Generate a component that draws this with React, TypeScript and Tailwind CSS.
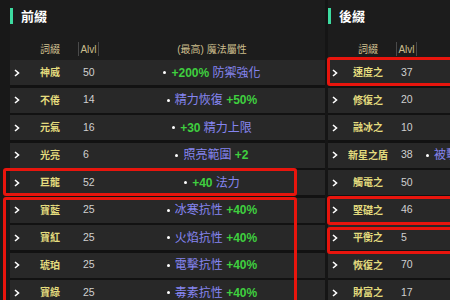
import React from 'react';

type Affix = {
  name: string;
  alvl: number;
  prop: React.ReactNode;
};

const G = ({ children }: { children: React.ReactNode }) => (
  <span className="font-bold text-[#3fcf3f]">{children}</span>
);
const B = ({ children }: { children: React.ReactNode }) => (
  <span className="text-[#8585f0]">{children}</span>
);

const prefixes: Array<Affix> = [
  { name: '神威', alvl: 50, prop: <><G>+200%</G> <B>防禦強化</B></> },
  { name: '不倦', alvl: 14, prop: <><B>精力恢復</B> <G>+50%</G></> },
  { name: '元氣', alvl: 16, prop: <><G>+30</G> <B>精力上限</B></> },
  { name: '光亮', alvl: 6, prop: <><B>照亮範圍</B> <G>+2</G></> },
  { name: '巨龍', alvl: 52, prop: <><G>+40</G> <B>法力</B></> },
  { name: '寶藍', alvl: 25, prop: <><B>冰寒抗性</B> <G>+40%</G></> },
  { name: '寶紅', alvl: 25, prop: <><B>火焰抗性</B> <G>+40%</G></> },
  { name: '琥珀', alvl: 25, prop: <><B>電擊抗性</B> <G>+40%</G></> },
  { name: '寶綠', alvl: 25, prop: <><B>毒素抗性</B> <G>+40%</G></> },
];

const suffixes: Array<Affix> = [
  { name: '速度之', alvl: 37, prop: <><G>+20%</G> <B>攻擊速度</B></> },
  { name: '修復之', alvl: 20, prop: <><B>自動修復</B></> },
  { name: '融冰之', alvl: 10, prop: <><B>冰凍時間減半</B></> },
  { name: '新星之盾', alvl: 38, prop: <><B>被擊中時有</B> <G>10%</G> <B>機率施放</B> <G>7</G> <B>級新星術</B></> },
  { name: '觸電之', alvl: 50, prop: <><B>閃電傷害</B> <G>+1-60</G></> },
  { name: '堅礎之', alvl: 46, prop: <><B>防禦</B> <G>+15</G></> },
  { name: '平衡之', alvl: 5, prop: <><G>+10%</G> <B>受擊恢復</B></> },
  { name: '恢復之', alvl: 70, prop: <><B>生命恢復</B> <G>+5</G></> },
  { name: '財富之', alvl: 17, prop: <><G>+40%</G> <B>金幣掉落</B></> },
];

const Chevron = () => (
  <svg width="6" height="8" viewBox="0 0 6 8" className="ml-[4px]">
    <polyline points="1,1 4.5,4 1,7" fill="none" stroke="#ffffff" strokeWidth="1.6" />
  </svg>
);

const Panel = ({ title, rows }: { title: string; rows: Array<Affix> }) => {
  return (
    <div className="w-[315px] shrink-0 flex flex-col">
      <div className="shrink-0 flex items-center h-[16px] mt-[8px]">
        <div className="w-[3px] h-[16px] bg-[#3ddba0]" />
        <div className="ml-[8px] text-[13px] font-bold text-white leading-none">{title}</div>
      </div>
      <div className="shrink-0 flex items-center h-[22px] mt-[14px] text-[10px] text-[#cbbd8c]">
        <div className="w-[14px]" />
        <div className="w-[52px] text-center">詞綴</div>
        <div className="ml-[2px] w-[21px] h-[14px] border-x border-[#4a4a4a] flex items-center justify-center">
          Alvl
        </div>
        <div className="flex-1 text-center">(最高) 魔法屬性</div>
      </div>
      <div className="shrink-0 flex flex-col gap-[2.5px] bg-[#121212]">
        {rows.map((row) => (
          <div key={row.name} className="shrink-0 flex items-center h-[25px] bg-[#282828]">
            <div className="w-[14px] flex items-center">
              <Chevron />
            </div>
            <div className="w-[52px] text-center text-[10px] font-bold text-[#e4dc7e] whitespace-nowrap">
              {row.name}
            </div>
            <div className="ml-[2px] w-[21px] pl-[5px] text-[10.5px] text-[#d0d0d0]">{row.alvl}</div>
            <div className="flex-1 flex justify-center items-center whitespace-nowrap text-[12px] overflow-hidden">
              <span className="w-[3px] h-[3px] rounded-full bg-white mr-[5px] shrink-0" />
              <span className="whitespace-nowrap">{row.prop}</span>
            </div>
          </div>
        ))}
      </div>
    </div>
  );
};

const App: React.FC = () => {
  return (
    <div
      className="relative w-[450px] h-[300px] overflow-hidden bg-[#1c1c1c] flex items-start"
      style={{ fontFamily: '"Liberation Sans", "Noto Sans CJK TC", sans-serif' }}
    >
      <div className="w-[10px] h-[300px] shrink-0 bg-[#181818]" />
      <Panel title="前綴" rows={prefixes} />
      <div className="w-[3px] h-[300px] shrink-0 bg-[#151515]" />
      <Panel title="後綴" rows={suffixes} />

      {/* red highlight boxes */}
      <div className="absolute left-[3px] top-[168px] w-[294px] h-[28px] border-[3px] border-[#e8150d] rounded-[3px]" />
      <div className="absolute left-[3px] top-[197px] w-[294px] h-[120px] border-[3px] border-[#e8150d] rounded-[3px]" />
      <div className="absolute left-[327px] top-[57px] w-[140px] h-[29px] border-[3px] border-[#e8150d] rounded-[3px]" />
      <div className="absolute left-[327px] top-[196px] w-[140px] h-[29px] border-[3px] border-[#e8150d] rounded-[3px]" />
      <div className="absolute left-[327px] top-[227px] w-[140px] h-[27px] border-[3px] border-[#e8150d] rounded-[3px]" />
    </div>
  );
};

export default App;
